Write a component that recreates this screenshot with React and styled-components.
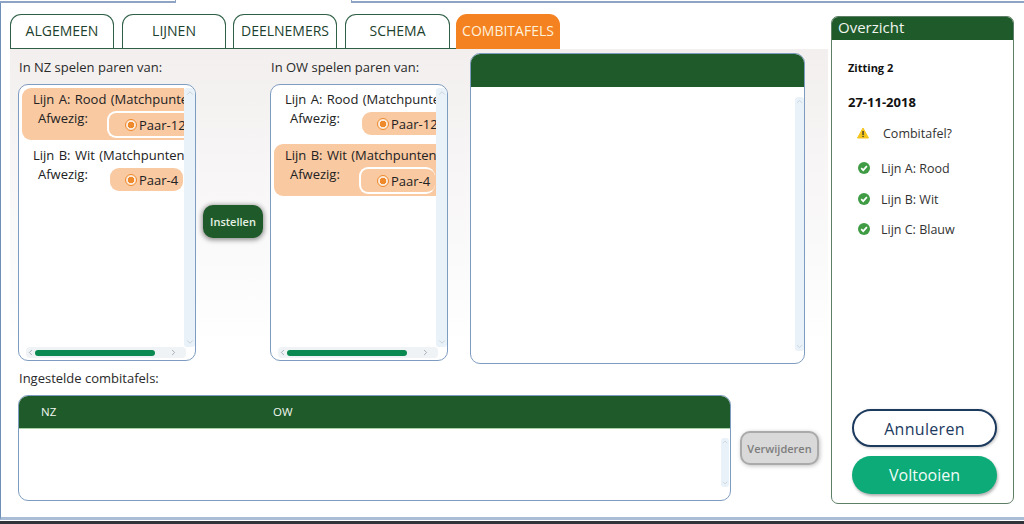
import styled, { createGlobalStyle } from "styled-components";
import { ChevronUp, ChevronDown, ChevronLeft, ChevronRight } from "lucide-react";

const GREEN = "#1f5a2a";
const FONT = '"Open Sans", "Noto Sans", sans-serif';

const Global = createGlobalStyle`
  html, body { margin: 0; padding: 0; background: #fff; }
  body { font-family: ${FONT}; color: #222; }
`;

const Page = styled.div`
  width: 1024px;
  height: 524px;
  overflow: hidden;
  display: flex;
  flex-direction: column;
  background: #fff;
`;
const TopRule = styled.div`
  display: flex;
  height: 3px;
  flex-shrink: 0;
`;
const RuleSegment = styled.div`
  width: ${(p) => p.$w}px;
  ${(p) => (p.$open ? "" : "border-bottom: 2px solid #8fa3c4; border-right: 1px solid #8fa3c4;")}
  ${(p) => (p.$grow ? "flex: 1; border-right: 0; border-left: 1px solid #8fa3c4;" : "")}
`;
const Frame = styled.div`
  flex: 1;
  display: flex;
  padding: 11px 10px 0 9px;
  border-left: 1px solid #6d8fb8;
  border-bottom: 3px solid #a9bdd6;
  min-height: 0;
`;
const Footer = styled.div`
  height: 4px;
  flex-shrink: 0;
  background: linear-gradient(#fff 0 1px, #30343a 1px);
`;
const Main = styled.div`
  width: 818px;
  display: flex;
  flex-direction: column;
`;
const Tabs = styled.div`
  display: flex;
  height: 35px;
  flex-shrink: 0;
`;
const TabLine = styled.div`
  display: flex;
  padding-right: 6px;
  border-bottom: 1px solid #2f5f46;
`;
const Tab = styled.div`
  width: ${(p) => p.$w || 104}px;
  margin-left: ${(p) => p.$ml || 0}px;
  box-sizing: border-box;
  display: flex;
  align-items: center;
  justify-content: center;
  font-size: 14px;
  padding-bottom: 3px;
  border-radius: 11px 11px 0 0;
  border: 1px solid ${(p) => (p.$active ? "#f58220" : "#2f5f46")};
  border-bottom: 0;
  background: ${(p) => (p.$active ? "#f58220" : "#fff")};
  color: ${(p) => (p.$active ? "#fdf1dc" : "#1d3f2e")};
`;
const Body = styled.div`
  flex: 1;
  display: flex;
  flex-direction: column;
  padding: 4px 0 0 8px;
  background: linear-gradient(#f2efee 0, #f7f5f5 110px, #fff 300px);
`;
const TopRow = styled.div`
  display: flex;
  height: 311px;
  flex-shrink: 0;
`;
const ListColumn = styled.div`
  width: 178px;
  display: flex;
  flex-direction: column;
`;
const Label = styled.div`
  font-size: 13px;
  line-height: 18px;
  height: 18px;
  margin: 5px 0 8px 1px;
  white-space: nowrap;
  color: #2a2a2a;
`;
const ListBox = styled.div`
  box-sizing: border-box;
  height: 277px;
  border: 1px solid #7e9cc0;
  border-radius: 10px;
  background: #fff;
  display: flex;
  flex-direction: column;
  overflow: hidden;
`;
const ListMiddle = styled.div`
  flex: 1;
  min-height: 0;
  display: flex;
  padding: 3px 0 0 3px;
`;
const Items = styled.div`
  width: 162px;
  display: flex;
  flex-direction: column;
  gap: 4px;
  overflow: hidden;
`;
const Item = styled.div`
  height: 52px;
  flex-shrink: 0;
  box-sizing: border-box;
  padding: 3px 0 0 11px;
  border-radius: 9px 0 0 9px;
  background: ${(p) => (p.$on ? "#f9c9a2" : "transparent")};
  overflow: hidden;
`;
const ItemTitle = styled.div`
  font-size: 13px;
  line-height: 17px;
  word-spacing: 1px;
  white-space: nowrap;
`;
const ItemRow = styled.div`
  display: flex;
  height: 30px;
  font-size: 13px;
`;
const Afwezig = styled.span`
  width: 77px;
  padding-left: 5px;
  flex-shrink: 0;
  box-sizing: border-box;
  line-height: 20px;
`;
const Pill = styled.div`
  flex-shrink: 0;
  box-sizing: border-box;
  width: ${(p) => p.$w}px;
  height: ${(p) => (p.$on ? 27 : 23)}px;
  margin: ${(p) => (p.$on ? "3px 0 0 -3px" : "4px 0 0 0")};
  padding-left: ${(p) => (p.$on ? 16 : 15)}px;
  display: flex;
  align-items: center;
  gap: 2px;
  border-radius: 9px;
  background: #f9c9a2;
  ${(p) => (p.$on ? "border: 2px solid #fff; border-right: 0;" : "")}
  font-size: 13px;
  white-space: nowrap;
`;
const Radio = styled.span`
  width: 12px;
  height: 12px;
  flex-shrink: 0;
  box-sizing: border-box;
  border: 1.5px solid #ee8a2c;
  border-radius: 50%;
  background: radial-gradient(circle, #ee8a2c 0 3px, #fbe9da 3.4px);
`;
const VScroll = styled.div`
  width: ${(p) => p.$w || 11}px;
  flex-shrink: 0;
  margin: ${(p) => p.$m || "0"};
  display: flex;
  flex-direction: column;
  justify-content: space-between;
  align-items: center;
  background: #e9f2f9;
  color: #c3ccd3;
  border-radius: 3px;
`;
const HScroll = styled.div`
  height: 11px;
  margin: 0 9px 2px 7px;
  padding-right: 8px;
  flex-shrink: 0;
  display: flex;
  align-items: center;
  background: #f0f3f6;
  border-radius: 4px;
  color: #8f9aa3;
`;
const HThumb = styled.div`
  width: 120px;
  height: 6px;
  margin-right: auto;
  border-radius: 3px;
  background: #0a8a50;
`;
const MiddleColumn = styled.div`
  width: 74px;
  display: flex;
  justify-content: center;
  padding-top: 152px;
  box-sizing: border-box;
`;
const RoundButton = styled.div`
  width: ${(p) => p.$w}px;
  height: ${(p) => p.$h}px;
  box-sizing: border-box;
  display: flex;
  align-items: center;
  justify-content: center;
  font-size: 11px;
  font-weight: 600;
  border-radius: 10px;
`;
const SetButton = styled(RoundButton)`
  background: ${GREEN};
  color: #e6f2e4;
  box-shadow: 0 1px 5px 1px #00000070;
`;
const RemoveButton = styled(RoundButton)`
  margin: 36px 0 0 9px;
  background: #d9d9d9;
  color: #7d7d7d;
  border: 2px solid #aaa;
  box-shadow: 1px 1px 4px #00000040;
`;
const ResultPanel = styled.div`
  width: 335px;
  height: 311px;
  margin-left: 22px;
  box-sizing: border-box;
  border: 1px solid #7e9cc0;
  border-radius: 10px;
  background: #fff;
  overflow: hidden;
  display: flex;
  flex-direction: column;
`;
const PanelHead = styled.div`
  height: 33px;
  flex-shrink: 0;
  background: ${GREEN};
`;
const PanelBody = styled.div`
  flex: 1;
  min-height: 0;
  display: flex;
  justify-content: flex-end;
`;
const BottomRow = styled.div`
  display: flex;
`;
const Table = styled.div`
  width: 713px;
  height: 106px;
  box-sizing: border-box;
  border: 1px solid #7e9cc0;
  border-radius: 10px;
  background: #fff;
  overflow: hidden;
  display: flex;
  flex-direction: column;
`;
const TableHead = styled.div`
  height: 33px;
  flex-shrink: 0;
  box-sizing: border-box;
  display: grid;
  grid-template-columns: 232px 1fr;
  padding: 0 0 2px 22px;
  align-items: center;
  background: ${GREEN};
  border-bottom: 1px solid #a7d0a9;
  color: #f2f7f0;
  font-size: 11.5px;
`;
const Side = styled.aside`
  width: 183px;
  height: 488px;
  margin: 2px 0 0 3px;
  box-sizing: border-box;
  border: 1px solid #5d7f66;
  border-radius: 7px;
  overflow: hidden;
  display: flex;
  flex-direction: column;
  background: #fff;
`;
const SideHead = styled.div`
  height: 23px;
  flex-shrink: 0;
  padding-left: 6px;
  background: ${GREEN};
  color: #f0f5ee;
  font-size: 15px;
  line-height: 21px;
`;
const SideBody = styled.div`
  flex: 1;
  display: flex;
  flex-direction: column;
  padding: 0 16px 9px 20px;
`;
const Session = styled.div`
  margin: 20px 0 0 -4px;
  font-size: 11px;
  line-height: 16px;
  font-weight: 700;
  color: #111;
`;
const DateText = styled.div`
  margin: 17px 0 0 -4px;
  font-size: 13px;
  line-height: 18px;
  font-weight: 700;
  color: #111;
`;
const Status = styled.div`
  display: flex;
  align-items: center;
  height: 20px;
  margin-top: ${(p) => p.$mt}px;
  margin-left: ${(p) => p.$ml}px;
  gap: ${(p) => p.$gap || 11}px;
  font-size: 12.5px;
  color: #333;
`;
const Spacer = styled.div`
  flex: 1;
`;
const BigButton = styled.div`
  width: 145px;
  height: 38px;
  box-sizing: border-box;
  display: flex;
  align-items: center;
  justify-content: center;
  border-radius: 19px;
  font-size: 16px;
`;
const CancelButton = styled(BigButton)`
  border: 2px solid #1c3a5e;
  background: #fff;
  color: #1c3a5e;
  letter-spacing: 0.3px;
  padding-top: 1px;
  box-shadow: 1px 1px 3px #00000040;
`;
const DoneButton = styled(BigButton)`
  margin-top: 9px;
  background: #0cab78;
  color: #f2fbf7;
  box-shadow: 1px 2px 3px #00000050;
`;

const WarnIcon = () => (
  <svg width="12" height="12" viewBox="0 0 12 12">
    <path d="M6 1 L11.5 11 H0.5 Z" fill="#f6c51c" stroke="#f6c51c" strokeLinejoin="round" />
    <rect x="5.4" y="4" width="1.3" height="4" fill="#333" />
    <rect x="5.4" y="8.8" width="1.3" height="1.3" fill="#333" />
  </svg>
);
const CheckIcon = () => (
  <svg width="12" height="12" viewBox="0 0 12 12">
    <circle cx="6" cy="6" r="6" fill="#3f9c45" />
    <path d="M3.2 6.2 L5.2 8.2 L8.9 4.2" fill="none" stroke="#fff" strokeWidth="1.7" />
  </svg>
);

const Entry = ({ title, on, pillW }) => (
  <Item $on={on}>
    <ItemTitle>{title}</ItemTitle>
    <ItemRow>
      <Afwezig>Afwezig:</Afwezig>
      <Pill $on={on} $w={on ? pillW + 3 : pillW}>
        <Radio />
        {pillW > 74 ? "Paar-12" : "Paar-4"}
      </Pill>
    </ItemRow>
  </Item>
);

const ListPanel = ({ label, selected }) => (
  <ListColumn>
    <Label>{label}</Label>
    <ListBox>
      <ListMiddle>
        <Items>
          <Entry title="Lijn A: Rood (Matchpunten)" on={selected === 0} pillW={90} />
          <Entry title="Lijn B: Wit (Matchpunten)" on={selected === 1} pillW={73} />
        </Items>
        <VScroll>
          <ChevronUp size={10} />
          <ChevronDown size={10} />
        </VScroll>
      </ListMiddle>
      <HScroll>
        <ChevronLeft size={9} />
        <HThumb />
        <ChevronRight size={9} />
      </HScroll>
    </ListBox>
  </ListColumn>
);

export default function App() {
  return (
    <Page>
      <Global />
      <TopRule>
        <RuleSegment $w={175} />
        <RuleSegment $w={175} $open />
        <RuleSegment $grow />
      </TopRule>
      <Frame>
        <Main>
          <Tabs>
            <TabLine>
              <Tab>ALGEMEEN</Tab>
              <Tab $ml={8}>LIJNEN</Tab>
              <Tab $ml={7}>DEELNEMERS</Tab>
              <Tab $ml={8} $w={105}>SCHEMA</Tab>
            </TabLine>
            <Tab $active>COMBITAFELS</Tab>
          </Tabs>
          <Body>
            <TopRow>
              <ListPanel label="In NZ spelen paren van:" selected={0} />
              <MiddleColumn>
                <SetButton $w={60} $h={33}>Instellen</SetButton>
              </MiddleColumn>
              <ListPanel label="In OW spelen paren van:" selected={1} />
              <ResultPanel>
                <PanelHead />
                <PanelBody>
                  <VScroll $w={9} $m="10px 0 12px">
                    <ChevronUp size={9} />
                    <ChevronDown size={9} />
                  </VScroll>
                </PanelBody>
              </ResultPanel>
            </TopRow>
            <Label>Ingestelde combitafels:</Label>
            <BottomRow>
              <Table>
                <TableHead>
                  <span>NZ</span>
                  <span>OW</span>
                </TableHead>
                <PanelBody>
                  <VScroll $w={8} $m="9px 1px 13px 0">
                    <ChevronUp size={8} />
                    <ChevronDown size={8} />
                  </VScroll>
                </PanelBody>
              </Table>
              <RemoveButton $w={79} $h={34}>Verwijderen</RemoveButton>
            </BottomRow>
          </Body>
        </Main>
        <Side>
          <SideHead>Overzicht</SideHead>
          <SideBody>
            <Session>Zitting 2</Session>
            <DateText>27-11-2018</DateText>
            <Status $mt={12} $ml={5} $gap={14}>
              <WarnIcon />
              Combitafel?
            </Status>
            <Status $mt={15} $ml={6}>
              <CheckIcon />
              Lijn A: Rood
            </Status>
            <Status $mt={11} $ml={6}>
              <CheckIcon />
              Lijn B: Wit
            </Status>
            <Status $mt={10} $ml={6}>
              <CheckIcon />
              Lijn C: Blauw
            </Status>
            <Spacer />
            <CancelButton>Annuleren</CancelButton>
            <DoneButton>Voltooien</DoneButton>
          </SideBody>
        </Side>
      </Frame>
      <Footer />
    </Page>
  );
}
